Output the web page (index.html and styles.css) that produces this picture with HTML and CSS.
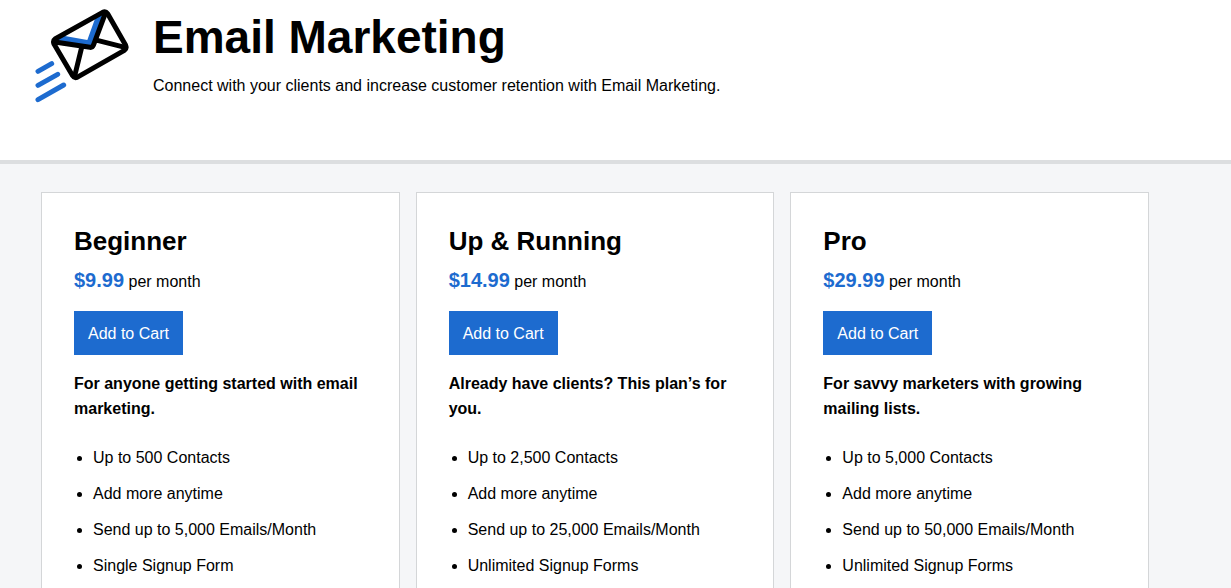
FILE: index.html
```html
<!DOCTYPE html>
<html lang="en">
<head>
<meta charset="utf-8">
<meta name="viewport" content="width=device-width, initial-scale=1">
<title>Email Marketing</title>
<link rel="stylesheet" href="styles.css">
</head>
<body>
<header class="hero">
  <svg class="hero-icon" viewBox="15 24 288 288" fill="none" stroke-linecap="round" stroke-linejoin="round" aria-hidden="true">
    <path d="M92 106L172 120L198 48L224 40L188 138L78 124Z" fill="#1d6bcf"/>
    <g stroke="#000" stroke-width="15">
      <path d="M75 117L218 37Q227 33 233 41L287 136Q291 146 283 151L141 232Q133 235 128 227L72 132Q68 122 75 117Z"/>
      <path d="M74 126L180 142Q187 143 190 136L226 40M155 142L134 228M202 121L285 142"/>
    </g>
    <g stroke="#1d6bcf" stroke-width="15">
      <path d="M24 214L65 191M24 256L83 223M24 299L101 255"/>
    </g>
  </svg>
  <div class="hero-text">
    <h1 class="hero-title">Email Marketing</h1>
    <p class="hero-lead">Connect with your clients and increase customer retention with Email Marketing.</p>
  </div>
</header>
<main class="plans">
  <section class="plan">
    <h2 class="plan-name">Beginner</h2>
    <p class="plan-price"><strong class="amount">$9.99</strong> per month</p>
    <button class="cart" type="button">Add to Cart</button>
    <p class="plan-note">For anyone getting started with email marketing.</p>
    <ul class="features">
      <li>Up to 500 Contacts</li>
      <li>Add more anytime</li>
      <li>Send up to 5,000 Emails/Month</li>
      <li>Single Signup Form</li>
    </ul>
  </section>
  <section class="plan">
    <h2 class="plan-name">Up &amp; Running</h2>
    <p class="plan-price"><strong class="amount">$14.99</strong> per month</p>
    <button class="cart" type="button">Add to Cart</button>
    <p class="plan-note">Already have clients? This plan’s for you.</p>
    <ul class="features">
      <li>Up to 2,500 Contacts</li>
      <li>Add more anytime</li>
      <li>Send up to 25,000 Emails/Month</li>
      <li>Unlimited Signup Forms</li>
    </ul>
  </section>
  <section class="plan">
    <h2 class="plan-name">Pro</h2>
    <p class="plan-price"><strong class="amount">$29.99</strong> per month</p>
    <button class="cart" type="button">Add to Cart</button>
    <p class="plan-note">For savvy marketers with growing mailing lists.</p>
    <ul class="features">
      <li>Up to 5,000 Contacts</li>
      <li>Add more anytime</li>
      <li>Send up to 50,000 Emails/Month</li>
      <li>Unlimited Signup Forms</li>
    </ul>
  </section>
</main>
</body>
</html>
```
FILE: styles.css
```css
* {
  box-sizing: border-box;
}

body {
  margin: 0;
  background: #f5f6f8;
  color: #000;
  font: 16px/25px "Liberation Sans", Arial, sans-serif;
}

h1,
h2,
p,
ul {
  margin: 0;
}

.hero {
  display: flex;
  align-items: flex-start;
  gap: 22px;
  padding: 8px 35px 56px;
  background: #fff;
  border-bottom: 4px solid #dcdee0;
}

.hero-icon {
  flex: none;
  width: 96px;
  height: 96px;
}

.hero-title {
  margin: 2px 0 9px;
  font-size: 46px;
  line-height: 54px;
}

.plans {
  display: grid;
  grid-template-columns: repeat(3, 1fr);
  gap: 16px;
  padding: 28px 82px 32px 41px;
}

.plan {
  padding: 32px;
  background: #fff;
  border: 1px solid #d4d6d8;
}

.plan-name {
  font-size: 26px;
  line-height: 32px;
}

.plan-price {
  margin: 11px 0 17px;
}

.amount {
  color: #1d6bcf;
  font-size: 20px;
}

.cart {
  display: block;
  height: 44px;
  margin-bottom: 16px;
  padding: 0 14px;
  border: 0;
  background: #1d6bcf;
  color: #fff;
  font: inherit;
  cursor: pointer;
}

.plan-note {
  margin-bottom: 24px;
  font-weight: bold;
}

.features {
  padding-left: 19px;
}

.features li {
  margin-bottom: 11px;
}
```
